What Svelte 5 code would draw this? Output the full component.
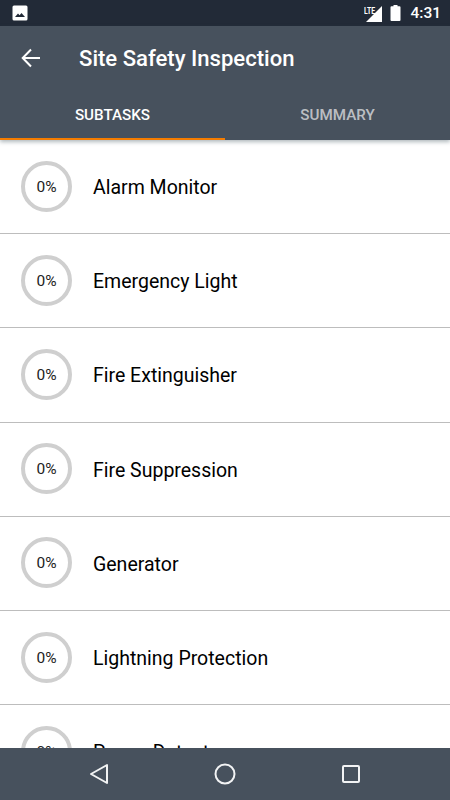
<script lang="ts">
	const subtasks = [
		'Alarm Monitor',
		'Emergency Light',
		'Fire Extinguisher',
		'Fire Suppression',
		'Generator',
		'Lightning Protection',
		'Power Detector'
	];
</script>

<div class="screen">
	<div class="status">
		<svg class="pic" width="16" height="16" viewBox="0 0 16 16">
			<rect x="0.5" y="0.5" width="15" height="15" rx="1.5" fill="#fff" />
			<path d="M3 12l3-3.5 1.6 1.8L9.5 8 13 12z" fill="#222a37" />
		</svg>
		<div class="status-right">
			<span class="lte">LTE</span>
			<svg class="signal" width="16" height="16" viewBox="0 0 16 16"><path d="M0 16L16 0v16z" fill="#fff" /></svg>
			<svg class="battery" width="11" height="16" viewBox="0 0 11 16">
				<path d="M3.5 0h4v1.2h2a1 1 0 0 1 1 1V15a1 1 0 0 1-1 1h-8a1 1 0 0 1-1-1V2.200a1 1 0 0 1 1-1h2z" fill="#fff" />
			</svg>
			<span class="time">4:31</span>
		</div>
	</div>

	<header class="appbar">
		<div class="toolbar">
			<svg width="20" height="20" viewBox="0 0 20 20" fill="none" stroke="#fff" stroke-width="2">
				<path d="M19 10H2M10 1.500L1.700 10l8.300 8.500" />
			</svg>
			<h1>Site Safety Inspection</h1>
		</div>
		<div class="tabs">
			<div class="tab active">SUBTASKS</div>
			<div class="tab">SUMMARY</div>
		</div>
	</header>

	<main class="list">
		{#each subtasks as name}
			<div class="row">
				<div class="ring">0%</div>
				<div class="name">{name}</div>
			</div>
		{/each}
	</main>

	<nav class="navbar">
		<svg width="20" height="22" viewBox="0 0 20 22" fill="none" stroke="#f2f3f4" stroke-width="2" stroke-linejoin="round">
			<path d="M18 2v18L2 11z" />
		</svg>
		<svg width="22" height="22" viewBox="0 0 22 22" fill="none" stroke="#f2f3f4" stroke-width="2">
			<circle cx="11" cy="11" r="9.500" />
		</svg>
		<svg width="20" height="20" viewBox="0 0 20 20" fill="none" stroke="#f2f3f4" stroke-width="2" stroke-linejoin="round">
			<rect x="2" y="2" width="16" height="16" rx="1" />
		</svg>
	</nav>
</div>

<style>
	:global(body) {
		margin: 0;
	}

	.screen {
		width: 450px;
		height: 800px;
		display: flex;
		flex-direction: column;
		overflow: hidden;
		background: #fff;
		font-family: Roboto, sans-serif;
	}

	.status {
		height: 26px;
		flex: none;
		background: #222a37;
		display: flex;
		align-items: center;
		justify-content: space-between;
		padding: 0 9px 0 12px;
		color: #fff;
	}

	.status-right {
		display: flex;
		align-items: center;
		gap: 8px;
		position: relative;
	}

	.signal {
		margin-top: 1px;
	}

	.lte {
		position: absolute;
		left: -2px;
		top: 2px;
		font-size: 9.500px;
		font-weight: 700;
		transform: scaleX(0.72);
		transform-origin: left;
		line-height: 9px;
	}

	.time {
		font-size: 15.500px;
		font-weight: 500;
		margin-left: 1px;
	}

	.appbar {
		flex: none;
		height: 114px;
		background: #47515d;
		display: flex;
		flex-direction: column;
		box-shadow: 0 2px 4px rgba(60, 80, 90, 0.4);
		position: relative;
		z-index: 1;
	}

	.toolbar {
		height: 64px;
		display: flex;
		align-items: center;
		padding: 0 0 2px 21px;
		gap: 38px;
	}

	h1 {
		margin: 0;
		font-size: 22.100px;
		font-weight: 500;
		color: #fff;
	}

	.tabs {
		flex: 1;
		display: flex;
	}

	.tab {
		flex: 1;
		display: flex;
		align-items: center;
		justify-content: center;
		font-size: 15.200px;
		font-weight: 500;
		color: rgba(255, 255, 255, 0.65);
		padding-bottom: 2px;
		box-sizing: border-box;
	}

	.tab.active {
		color: #fff;
		border-bottom: 2px solid #f57c00;
		padding-bottom: 0;
	}

	.list {
		flex: 1;
		min-height: 0;
		overflow: hidden;
	}

	.row {
		height: 94.200px;
		box-sizing: border-box;
		border-bottom: 1px solid #bdbdbd;
		display: flex;
		align-items: center;
		padding-left: 21px;
		gap: 21px;
	}

	.ring {
		width: 51px;
		height: 51px;
		box-sizing: border-box;
		border: 4px solid #cfcfcf;
		border-radius: 50%;
		display: flex;
		align-items: center;
		justify-content: center;
		padding-top: 1px;
		font-size: 15.500px;
		color: #222;
		margin-bottom: 1px;
	}

	.name {
		font-size: 19.500px;
		color: #000;
		padding-top: 2px;
	}

	.navbar {
		flex: none;
		height: 52px;
		background: #47515d;
		display: grid;
		grid-template-columns: 126px 126px 126px;
		justify-content: center;
		justify-items: center;
		align-items: center;
		position: relative;
	}
</style>
